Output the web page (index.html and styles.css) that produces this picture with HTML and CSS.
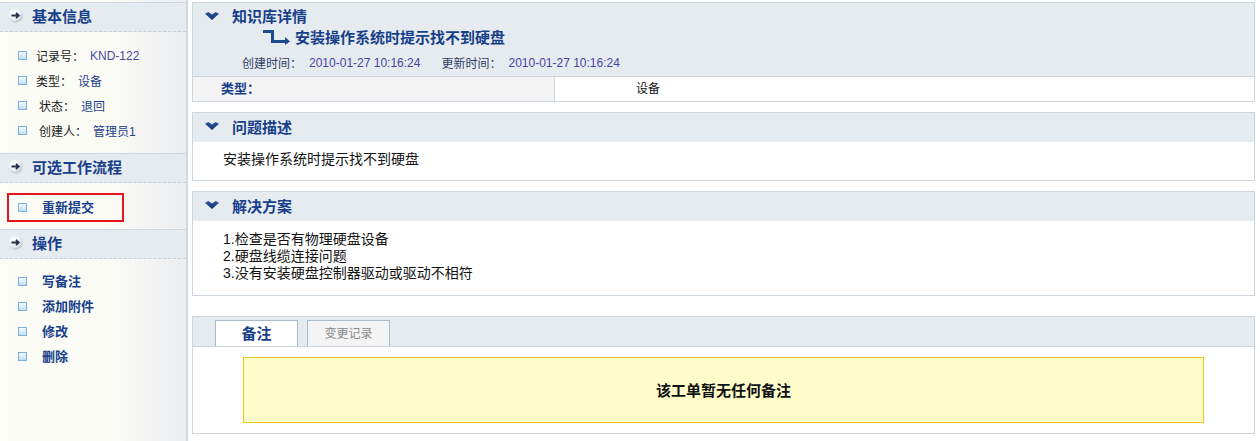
FILE: index.html
```html
<!DOCTYPE html>
<html lang="zh-CN">
<head>
<meta charset="utf-8">
<title>知识库详情</title>
<link rel="stylesheet" href="styles.css">
</head>
<body>
<div class="page">
  <aside class="sidebar">
    <section class="side-sec">
      <div class="side-head">
        <svg class="circ" width="15" height="15" viewBox="0 0 15 15"><defs><radialGradient id="cg1" cx="40%" cy="35%" r="70%"><stop offset="0" stop-color="#ffffff"/><stop offset="0.6" stop-color="#eceef1"/><stop offset="1" stop-color="#b3bac4"/></radialGradient></defs><circle cx="7.5" cy="7.5" r="7.2" fill="url(#cg1)"/><path d="M3.5 7.5H10.8M8 4.8L10.8 7.5L8 10.2" fill="none" stroke="#24344f" stroke-width="1.8"/></svg>
        <span>基本信息</span>
      </div>
      <ul class="side-list info">
        <li><i class="sq"></i><span class="lbl">记录号：</span><span class="val num">KND-122</span></li>
        <li><i class="sq"></i><span class="lbl">类型：</span><span class="val">设备</span></li>
        <li><i class="sq"></i><span class="lbl ind">状态：</span><span class="val">退回</span></li>
        <li><i class="sq"></i><span class="lbl ind">创建人：</span><span class="val">管理员1</span></li>
      </ul>
    </section>
    <section class="side-sec">
      <div class="side-head">
        <svg class="circ" width="15" height="15" viewBox="0 0 15 15"><defs><radialGradient id="cg2" cx="40%" cy="35%" r="70%"><stop offset="0" stop-color="#ffffff"/><stop offset="0.6" stop-color="#eceef1"/><stop offset="1" stop-color="#b3bac4"/></radialGradient></defs><circle cx="7.5" cy="7.5" r="7.2" fill="url(#cg2)"/><path d="M3.5 7.5H10.8M8 4.8L10.8 7.5L8 10.2" fill="none" stroke="#24344f" stroke-width="1.8"/></svg>
        <span>可选工作流程</span>
      </div>
      <div class="flow-body">
        <div class="flow-item"><i class="sq"></i><span class="act">重新提交</span></div>
      </div>
    </section>
    <section class="side-sec">
      <div class="side-head">
        <svg class="circ" width="15" height="15" viewBox="0 0 15 15"><defs><radialGradient id="cg3" cx="40%" cy="35%" r="70%"><stop offset="0" stop-color="#ffffff"/><stop offset="0.6" stop-color="#eceef1"/><stop offset="1" stop-color="#b3bac4"/></radialGradient></defs><circle cx="7.5" cy="7.5" r="7.2" fill="url(#cg3)"/><path d="M3.5 7.5H10.8M8 4.8L10.8 7.5L8 10.2" fill="none" stroke="#24344f" stroke-width="1.8"/></svg>
        <span>操作</span>
      </div>
      <ul class="side-list ops">
        <li><i class="sq"></i><span class="act">写备注</span></li>
        <li><i class="sq"></i><span class="act">添加附件</span></li>
        <li><i class="sq"></i><span class="act">修改</span></li>
        <li><i class="sq"></i><span class="act">删除</span></li>
      </ul>
    </section>
  </aside>

  <main class="main">
    <section class="box">
      <div class="detail-head">
        <div class="title-row">
          <svg class="chev" width="14" height="8" viewBox="0 0 14 8"><defs><linearGradient id="chg1" x1="0" y1="0" x2="0" y2="1"><stop offset="0" stop-color="#2c58a3"/><stop offset="1" stop-color="#102f6e"/></linearGradient></defs><polygon points="0,1.8 3.4,0 7,2.6 10.6,0 14,1.8 7,8" fill="url(#chg1)"/></svg>
          <h2>知识库详情</h2>
        </div>
        <div class="subtitle">
          <svg class="turn" width="27" height="15" viewBox="0 0 27 15"><path d="M0 0H11V10H22V7L27 11.5L22 15V13H8V3H0Z" fill="#1e4a90"/></svg>
          <span>安装操作系统时提示找不到硬盘</span>
        </div>
        <div class="dates">
          <span class="dl">创建时间：</span><span class="dv">2010-01-27 10:16:24</span>
          <span class="dl second">更新时间：</span><span class="dv">2010-01-27 10:16:24</span>
        </div>
      </div>
      <div class="kv">
        <div class="k">类型：</div>
        <div class="v">设备</div>
      </div>
    </section>

    <section class="box">
      <div class="box-head">
        <svg class="chev" width="14" height="8" viewBox="0 0 14 8"><defs><linearGradient id="chg2" x1="0" y1="0" x2="0" y2="1"><stop offset="0" stop-color="#2c58a3"/><stop offset="1" stop-color="#102f6e"/></linearGradient></defs><polygon points="0,1.8 3.4,0 7,2.6 10.6,0 14,1.8 7,8" fill="url(#chg2)"/></svg>
        <h2>问题描述</h2>
      </div>
      <div class="desc">安装操作系统时提示找不到硬盘</div>
    </section>

    <section class="box gap-big">
      <div class="box-head">
        <svg class="chev" width="14" height="8" viewBox="0 0 14 8"><defs><linearGradient id="chg3" x1="0" y1="0" x2="0" y2="1"><stop offset="0" stop-color="#2c58a3"/><stop offset="1" stop-color="#102f6e"/></linearGradient></defs><polygon points="0,1.8 3.4,0 7,2.6 10.6,0 14,1.8 7,8" fill="url(#chg3)"/></svg>
        <h2>解决方案</h2>
      </div>
      <div class="solution">
        <div>1.检查是否有物理硬盘设备</div>
        <div>2.硬盘线缆连接问题</div>
        <div>3.没有安装硬盘控制器驱动或驱动不相符</div>
      </div>
    </section>

    <section class="box">
      <div class="tabbar">
        <div class="tab active">备注</div>
        <div class="tab">变更记录</div>
      </div>
      <div class="tab-body">
        <div class="notice">该工单暂无任何备注</div>
      </div>
    </section>
  </main>
</div>
</body>
</html>
```

FILE: styles.css
```css
html, body {
  margin: 0;
  padding: 0;
  background: #ffffff;
}

body {
  width: 1260px;
  height: 441px;
  overflow: hidden;
  font-family: "Liberation Sans", "Noto Sans CJK SC", sans-serif;
  font-size: 12px;
  color: #222;
}

.page {
  display: flex;
  align-items: flex-start;
}

/* ---------- sidebar ---------- */
.sidebar {
  width: 186px;
  height: 441px;
  padding-top: 2px;
  box-sizing: content-box;
  border-right: 2px solid #d2d8e0;
  background: linear-gradient(to right, #fdfdf7 0%, #fbfbf6 58%, #ebedf0 100%);
  flex: none;
}

.side-head {
  height: 30px;
  box-sizing: border-box;
  border-top: 1px solid #cfd6df;
  border-bottom: 1px dashed #c9d0d9;
  background: #e6ebf0;
  display: flex;
  align-items: center;
  padding: 0 0 4px 8px;
  gap: 9px;
  font-family: "Noto Sans CJK SC", sans-serif;
  font-weight: 700;
  font-size: 15px;
  color: #173f8a;
}

.circ {
  flex: none;
}

.side-list {
  list-style: none;
  margin: 0;
  padding: 0 0 0 18px;
}

.side-list.info {
  padding-top: 11px;
  padding-bottom: 10px;
}

.side-list.ops {
  padding-top: 10px;
}

.side-list li {
  height: 25px;
  display: flex;
  align-items: center;
}

.sq {
  display: block;
  width: 9px;
  height: 9px;
  box-sizing: border-box;
  border: 1px solid #7fb0dc;
  background: linear-gradient(#f4faff, #bfe0f5);
  flex: none;
}

.info .sq {
  margin-right: 9px;
}

.lbl {
  font-family: "Noto Sans CJK SC", sans-serif;
  color: #1a1a1a;
  margin-right: 6px;
}

.lbl.ind {
  margin-left: 3px;
}

.val {
  color: #1f3f8c;
}

.val.num {
  color: #4a4a9c;
}

.act {
  font-family: "Noto Sans CJK SC", sans-serif;
  font-weight: 700;
  font-size: 13px;
  line-height: 16px;
  color: #173f8a;
  margin-top: -2px;
}

.ops .sq,
.flow-item .sq {
  margin-right: 15px;
}

.flow-body {
  padding: 10px 0 7px 7px;
}

.flow-item {
  width: 117px;
  height: 29px;
  box-sizing: border-box;
  border: 2px solid #e8141b;
  display: flex;
  align-items: center;
  padding-left: 9px;
}

/* ---------- main ---------- */
.main {
  width: 1063px;
  margin-left: 4px;
  padding-top: 2px;
  flex: none;
}

.box {
  border: 1px solid #cdd5df;
  margin-bottom: 10px;
  background: #ffffff;
}

.box.gap-big {
  margin-bottom: 20px;
}

h2 {
  margin: 0;
  font-family: "Noto Sans CJK SC", sans-serif;
  font-size: 15px;
  font-weight: 700;
  color: #173f8a;
}

.chev {
  flex: none;
}

.detail-head {
  height: 73px;
  box-sizing: border-box;
  background: #e6ebf0;
  padding-top: 3px;
}

.title-row {
  height: 20px;
  display: flex;
  align-items: center;
  padding-left: 12px;
  gap: 13px;
  line-height: 20px;
}

.subtitle {
  margin-top: 1px;
  height: 20px;
  display: flex;
  align-items: center;
  padding-left: 70px;
  gap: 5px;
  font-family: "Noto Sans CJK SC", sans-serif;
  font-weight: 700;
  font-size: 15px;
  color: #173f8a;
  line-height: 20px;
}

.dates {
  margin-top: 7px;
  height: 18px;
  line-height: 18px;
  padding-left: 49px;
  display: flex;
  align-items: center;
}

.dl {
  font-family: "Noto Sans CJK SC", sans-serif;
  color: #2f3f66;
  margin-right: 7px;
}

.dl.second {
  margin-left: 21px;
}

.dv {
  color: #4646a0;
}

.kv {
  display: grid;
  grid-template-columns: 362px 1fr;
  height: 24px;
  border-top: 1px solid #cdd5df;
  line-height: 22px;
}

.k {
  background: #f4f4f4;
  border-right: 1px solid #cdd5df;
  padding-left: 28px;
  font-family: "Noto Sans CJK SC", sans-serif;
  font-weight: 700;
  font-size: 13px;
  color: #173f8a;
}

.v {
  padding-left: 81px;
  font-family: "Noto Sans CJK SC", sans-serif;
  color: #111;
}

.box-head {
  height: 29px;
  box-sizing: border-box;
  padding: 0 0 3px 12px;
  background: #e6ebf0;
  display: flex;
  align-items: center;
  gap: 13px;
}

.desc {
  padding: 6px 0 12px 30px;
  line-height: 20px;
  font-family: "Noto Sans CJK SC", sans-serif;
  font-size: 14px;
  color: #111;
}

.solution {
  padding: 10px 0 13px 30px;
  line-height: 17px;
  font-family: "Liberation Sans", "Noto Sans CJK SC", sans-serif;
  font-size: 14px;
  color: #111;
}

/* ---------- tabs ---------- */
.tabbar {
  height: 26px;
  padding: 3px 0 0 22px;
  background: #e6ebf0;
  border-bottom: 1px solid #cdd5df;
  display: flex;
  align-items: flex-end;
  gap: 9px;
}

.tab {
  width: 83px;
  height: 26px;
  box-sizing: border-box;
  border: 1px solid #a9bace;
  border-bottom: none;
  background: #f4f4f4;
  display: flex;
  align-items: center;
  justify-content: center;
  padding-bottom: 2px;
  font-family: "Noto Sans CJK SC", sans-serif;
  font-size: 12px;
  color: #8a8a8a;
}

.tab.active {
  background: #ffffff;
  font-weight: 700;
  font-size: 15px;
  color: #173f8a;
}

.tab-body {
  padding: 10px 50px;
}

.notice {
  height: 66px;
  box-sizing: border-box;
  border: 1px solid #f2c51a;
  background: #fefdca;
  display: flex;
  align-items: center;
  justify-content: center;
  padding-bottom: 2px;
  font-family: "Noto Sans CJK SC", sans-serif;
  font-weight: 700;
  font-size: 15px;
  color: #111;
}
```
